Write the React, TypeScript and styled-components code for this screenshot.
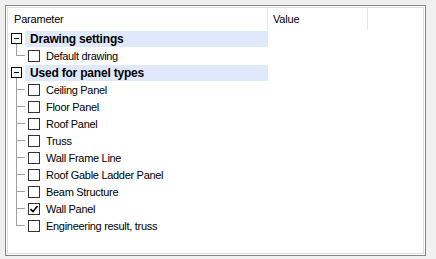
import React from 'react'
import styled, { createGlobalStyle } from 'styled-components'

const GlobalStyle = createGlobalStyle`
    html, body {
        margin: 0;
        padding: 0;
        background: #f0f0f0;
    }
    body {
        font-family: "Liberation Sans", Arial, sans-serif;
        font-size: 11px;
        color: #000;
    }
`

const Page = styled.div`
    width: 436px;
    height: 259px;
    padding: 5px 0 0 5px;
    box-sizing: border-box;
`

const Frame = styled.div`
    width: 421px;
    height: 251px;
    box-sizing: border-box;
    border: 1px solid #82878f;
    padding: 1px;
    background: #fff;
`

const Inner = styled.div`
    height: 100%;
    box-sizing: border-box;
    border: 1px solid #dedede;
    background: #fff;
    overflow: hidden;
`

const Header = styled.div`
    display: grid;
    grid-template-columns: 260px 100px 1fr;
    height: 22px;
`

const HeaderCell = styled.div<{ $pad: number; $divider?: boolean }>`
    display: flex;
    align-items: center;
    padding-left: ${(p) => p.$pad}px;
    border-right: ${(p) => (p.$divider ? '1px solid #e5e5e5' : 'none')};
    letter-spacing: -0.2px;
`

const Row = styled.div`
    display: grid;
    grid-template-columns: 17px 243px 1fr;
    height: 17px;
`

const Gutter = styled.svg`
    display: block;
    width: 17px;
    height: 17px;
`

const GroupCell = styled.div`
    margin-top: 1px;
    background: #e0e9fb;
    display: flex;
    align-items: center;
    padding-left: 5px;
    font-weight: bold;
    font-size: 12px;
    letter-spacing: -0.2px;
`

const ItemCell = styled.div`
    display: flex;
    align-items: center;
    gap: 6px;
    padding-left: 3px;
    letter-spacing: -0.3px;
`

const Check = styled.span`
    width: 12px;
    height: 12px;
    box-sizing: border-box;
    border: 1px solid #333;
    background: #fff;
    display: flex;
    align-items: center;
    justify-content: center;
    flex-shrink: 0;
`

type Line = 'box' | 'tee' | 'end'

const TreeGutter = ({ kind }: { kind: Line }) => (
    <Gutter viewBox="0 0 17 17" shapeRendering="crispEdges">
        {kind === 'box' ? (
            <>
                <line x1="8.5" y1="14" x2="8.5" y2="17" stroke="#a0a0a0" />
                <rect x="3.5" y="3.5" width="10" height="10" fill="#fff" stroke="#000" />
                <line x1="6" y1="8.5" x2="11" y2="8.5" stroke="#000" />
            </>
        ) : (
            <>
                <line x1="8.5" y1="0" x2="8.5" y2={kind === 'tee' ? 17 : 9} stroke="#a0a0a0" />
                <line x1="8" y1="8.5" x2="17" y2="8.5" stroke="#a0a0a0" />
            </>
        )}
    </Gutter>
)

const groups = [
    { title: 'Drawing settings', items: [{ name: 'Default drawing', checked: false }] },
    {
        title: 'Used for panel types',
        items: [
            { name: 'Ceiling Panel', checked: false },
            { name: 'Floor Panel', checked: false },
            { name: 'Roof Panel', checked: false },
            { name: 'Truss', checked: false },
            { name: 'Wall Frame Line', checked: false },
            { name: 'Roof Gable Ladder Panel', checked: false },
            { name: 'Beam Structure', checked: false },
            { name: 'Wall Panel', checked: true },
            { name: 'Engineering result, truss', checked: false },
        ],
    },
]

export default function App() {
    return (
        <>
            <GlobalStyle />
            <Page>
                <Frame>
                    <Inner>
                        <Header>
                            <HeaderCell $pad={6} $divider>Parameter</HeaderCell>
                            <HeaderCell $pad={5} $divider>Value</HeaderCell>
                            <HeaderCell $pad={5} />
                        </Header>
                        {groups.map((g) => (
                            <React.Fragment key={g.title}>
                                <Row>
                                    <TreeGutter kind="box" />
                                    <GroupCell>{g.title}</GroupCell>
                                    <div />
                                </Row>
                                {g.items.map((it, i) => (
                                    <Row key={it.name}>
                                        <TreeGutter kind={i === g.items.length - 1 ? 'end' : 'tee'} />
                                        <ItemCell>
                                            <Check>
                                                {it.checked && (
                                                    <svg width="8" height="8" viewBox="0 0 8 8">
                                                        <path d="M0.5 4 L3 6.5 L7.5 1" fill="none" stroke="#000" strokeWidth="1.6" />
                                                    </svg>
                                                )}
                                            </Check>
                                            {it.name}
                                        </ItemCell>
                                        <div />
                                    </Row>
                                ))}
                            </React.Fragment>
                        ))}
                    </Inner>
                </Frame>
            </Page>
        </>
    )
}
